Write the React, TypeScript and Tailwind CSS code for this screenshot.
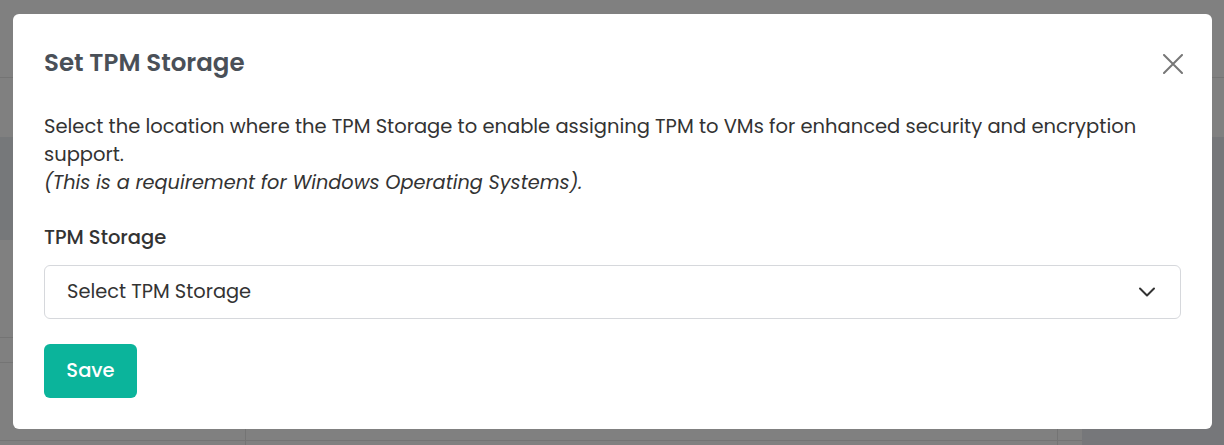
import React from "react";

export default function App() {
  const font = { fontFamily: '"Poppins", "Open Sans", sans-serif' };
  return (
    <div className="relative w-[1224px] h-[445px] overflow-hidden bg-[#808080]" style={font}>
      {/* underlying page (dimmed) */}
      <div className="flex flex-col h-full">
        <div className="h-[78px] border-b border-[#747474]" />
        <div className="h-[59px]" />
        <div className="flex flex-1">
          <div className="w-[246px] flex flex-col border-r border-[#747474]">
            <div className="h-[103px] bg-[#76787a]" />
            <div className="h-[98px] border-b border-[#747474]" />
            <div className="h-[25px] border-b border-[#747474]" />
            <div className="flex-1" />
            <div className="h-[5px] border-t border-[#747474]" />
          </div>
          <div className="w-[812px] flex flex-col border-r border-[#747474]">
            <div className="flex-1" />
            <div className="h-[5px] border-t border-[#747474]" />
          </div>
          <div className="w-[24px] flex flex-col">
            <div className="flex-1" />
            <div className="h-[5px] border-t border-[#747474]" />
          </div>
          <div className="flex-1 bg-[#76777a]" />
        </div>
      </div>

      {/* modal */}
      <div className="absolute left-[13px] top-[14px] w-[1199px] h-[415px] bg-white rounded-[6px] px-[31px] pt-[34px]">
        <div className="flex items-start justify-between">
          <h2 className="text-[24.5px] leading-[30px] font-semibold text-[#4a5058]">Set TPM Storage</h2>
          <button className="mt-[6px] mr-[-2px] text-[#777]">
            <svg width="20" height="20" viewBox="0 0 20 20" fill="none" stroke="currentColor" strokeWidth="2" strokeLinecap="round">
              <path d="M1 1 L19 19 M19 1 L1 19" />
            </svg>
          </button>
        </div>
        <p className="mt-[35px] text-[19.5px] leading-[28px] text-[#333]">
          Select the location where the TPM Storage to enable assigning TPM to VMs for enhanced security and encryption support.
          <br />
          <i className="text-[19.3px]">(This is a requirement for Windows Operating Systems).</i>
        </p>
        <label className="block mt-[27px] text-[19.5px] leading-[28px] font-medium text-[#333]">TPM Storage</label>
        <div className="mt-[13px] h-[54px] w-[1137px] border border-[#d6d8dc] rounded-[6px] flex items-center justify-between pl-[22px] pr-[24px]">
          <span className="text-[19.4px] text-[#333]">Select TPM Storage</span>
          <svg width="18" height="18" viewBox="0 0 18 18" fill="none" stroke="#333" strokeWidth="2" strokeLinecap="round" strokeLinejoin="round">
            <path d="M2 5.5 L9 12.5 L16 5.5" />
          </svg>
        </div>
        <button className="mt-[25px] h-[54px] w-[93px] rounded-[6px] bg-[#0bb49b] text-white text-[19.5px] font-medium">Save</button>
      </div>
    </div>
  );
}
